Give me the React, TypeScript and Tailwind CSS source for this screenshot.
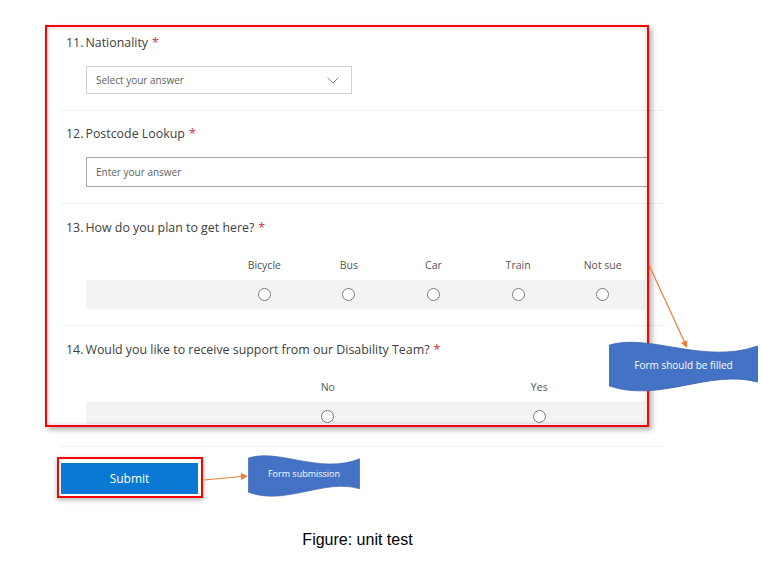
import React from "react";

const modes = ["Bicycle", "Bus", "Car", "Train", "Not sue"];
const support = ["No", "Yes"];

function Title({ n, text }: { n: number; text: string }) {
  return (
    <div className="flex h-5 items-center px-[5px] pt-[2px] text-[12.4px] leading-5 text-[#404040]">
      <span>{n}.</span>
      <span className="ml-[2px]">{text}</span>
      <span className="ml-[4px] text-[#c4314b]">*</span>
    </div>
  );
}

function Radio() {
  return <span className="block h-[13px] w-[13px] justify-self-center rounded-full border border-[#7a7a7a] bg-white" />;
}

function Wave({ label, small }: { label: string; small?: boolean }) {
  return (
    <div className="relative h-full w-full">
      <svg viewBox="0 0 148 54" preserveAspectRatio="none" className="absolute inset-0 h-full w-full">
        <path
          d="M0.5,6 C40,-6 95,26 147.5,7 L147.5,43 C100,30 50,64 0.5,47 Z"
          fill="#4472c4"
          stroke="#3a62aa"
          strokeWidth="0.8"
        />
      </svg>
      <div
        className={`relative flex h-full items-center justify-center text-white ${
          small ? "pb-[4px] text-[9px]" : "pb-[1px] text-[10px]"
        }`}
      >
        {label}
      </div>
    </div>
  );
}

export default function App() {
  return (
    <div className="relative h-[570px] w-[762px] overflow-hidden bg-white font-['Open_Sans',sans-serif]">
      {/* form */}
      <div className="ml-[61px] w-[604px] pt-[32px]">
        {/* 11 */}
        <div className="border-b border-[#efefef] pb-4">
          <Title n={11} text="Nationality" />
          <div className="ml-[25px] mt-[14px] flex h-[28px] w-[266px] items-center justify-between border border-[#cfcfcf] pl-[9px] pr-[12px] text-[10px] text-[#605e5c]">
            <span>Select your answer</span>
            <svg width="12" height="7" viewBox="0 0 12 7" fill="none">
              <path d="M0.5 0.5 L6 6 L11.5 0.5" stroke="#8a8886" strokeWidth="1" />
            </svg>
          </div>
        </div>

        {/* 12 */}
        <div className="border-b border-[#efefef] pb-4 pt-3">
          <Title n={12} text="Postcode Lookup" />
          <div className="ml-[25px] mt-[14px] flex h-[30px] w-[562px] items-center border border-[#a8a8a8] pl-[9px] text-[10px] text-[#605e5c]">
            Enter your answer
          </div>
        </div>

        {/* 13 */}
        <div className="border-b border-[#efefef] pb-4 pt-[13px]">
          <Title n={13} text="How do you plan to get here?" />
          <div className="ml-[25px] mt-[21px] w-[559px]">
            <div className="grid h-4 grid-cols-[136px_repeat(5,1fr)] items-center text-center text-[10.5px] text-[#555]">
              <span />
              {modes.map((m) => (
                <span key={m}>{m}</span>
              ))}
            </div>
            <div className="mt-[6px] grid h-[29px] grid-cols-[136px_repeat(5,1fr)] items-center bg-[#f3f3f3]">
              <span />
              {modes.map((m) => (
                <Radio key={m} />
              ))}
            </div>
          </div>
        </div>

        {/* 14 */}
        <div className="border-b border-[#efefef] pb-[22px] pt-[13px]">
          <Title n={14} text="Would you like to receive support from our Disability Team?" />
          <div className="ml-[25px] mt-[21px] w-[559px]">
            <div className="grid h-4 grid-cols-[136px_repeat(2,1fr)] items-center text-center text-[10.5px] text-[#555]">
              <span />
              {support.map((m) => (
                <span key={m}>{m}</span>
              ))}
            </div>
            <div className="mt-[6px] grid h-[22px] grid-cols-[136px_repeat(2,1fr)] items-start bg-[#f3f3f3] pt-[8px]">
              <span />
              {support.map((m) => (
                <Radio key={m} />
              ))}
            </div>
          </div>
        </div>

        <button className="mt-[16px] flex h-[31px] w-[137px] items-center justify-center bg-[#0b78d4] text-[12px] text-white">
          Submit
        </button>
      </div>

      <div className="mt-[36px] w-[715px] text-center font-['Liberation_Sans',Arial,sans-serif] text-[16px] leading-[19px] text-black">
        Figure: unit test
      </div>

      {/* annotation boxes */}
      <div className="pointer-events-none absolute left-[45px] top-[25px] h-[402px] w-[604px] border-2 border-[#ff0000] shadow-[3px_3px_5px_rgba(0,0,0,0.3),inset_0_0_5px_rgba(0,0,0,0.2)]" />
      <div className="pointer-events-none absolute left-[57px] top-[457px] h-[41px] w-[146px] border-2 border-[#ff0000] shadow-[0_2px_5px_rgba(0,0,0,0.3)]" />

      <div className="absolute left-[609px] top-[339px] h-[54px] w-[149px]">
        <Wave label="Form should be filled" />
      </div>
      <div className="absolute left-[248px] top-[453px] h-[45px] w-[112px]">
        <Wave label="Form submission" small />
      </div>

      <svg className="pointer-events-none absolute inset-0" width="762" height="570">
        <line x1="204" y1="480" x2="242" y2="476.5" stroke="#ed7d31" strokeWidth="1.2" />
        <polygon points="248,476 241.3,480.1 240.7,473.1" fill="#ed7d31" />
        <line x1="649" y1="265" x2="684.5" y2="342" stroke="#ed7d31" strokeWidth="1.2" />
        <polygon points="687,348 680.9,343.1 687.3,340.2" fill="#ed7d31" />
      </svg>
    </div>
  );
}
